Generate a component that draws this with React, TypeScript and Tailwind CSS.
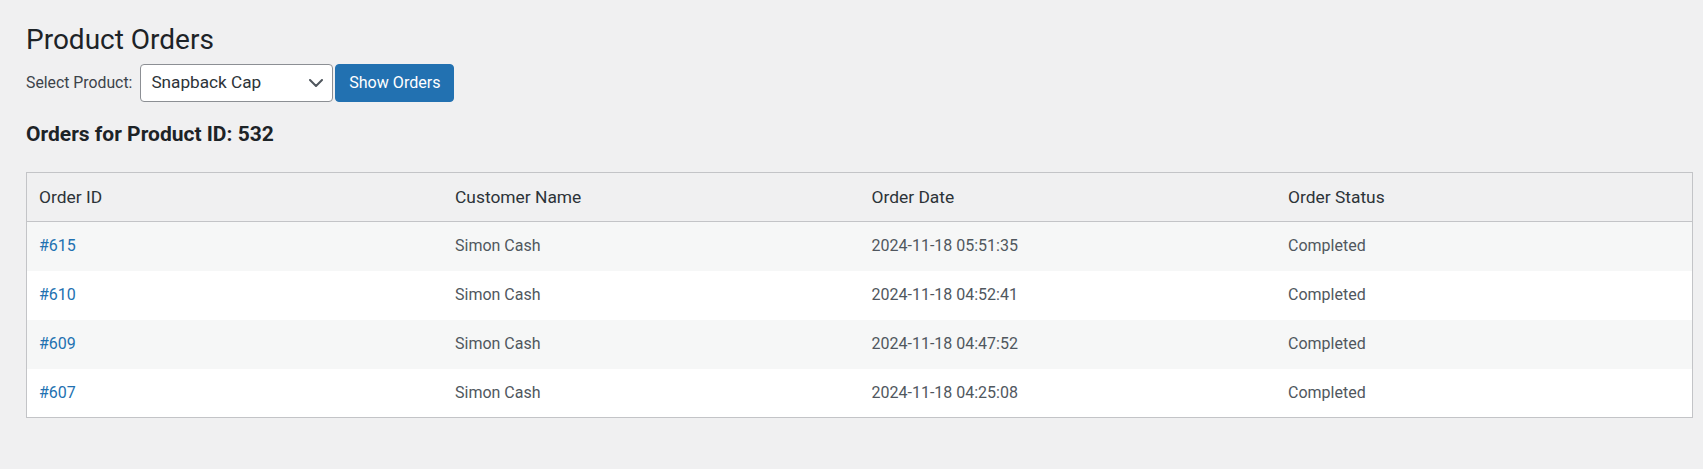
import React from "react";

const rows = [
  { id: "#615", name: "Simon Cash", date: "2024-11-18 05:51:35", status: "Completed" },
  { id: "#610", name: "Simon Cash", date: "2024-11-18 04:52:41", status: "Completed" },
  { id: "#609", name: "Simon Cash", date: "2024-11-18 04:47:52", status: "Completed" },
  { id: "#607", name: "Simon Cash", date: "2024-11-18 04:25:08", status: "Completed" },
];

export default function App() {
  return (
    <div
      className="min-h-screen bg-[#f0f0f1] pl-[26px] pr-[10px] pt-[22px]"
      style={{ fontFamily: "Roboto, 'Noto Sans', Arial, sans-serif" }}
    >
      <h1 className="text-[28px] leading-[36px] font-normal text-[#1d2327]">Product Orders</h1>
      <div className="mt-[6px] flex items-center h-[38px]">
        <span className="text-[15.8px] text-[#3c434a]">Select Product:</span>
        <div className="ml-[8px] flex h-[38px] w-[193px] items-center justify-between rounded-[4px] border border-[#8c8f94] bg-white pl-[10px] pr-[9px] text-[17.2px] text-[#2c3338]">
          <span>Snapback Cap</span>
          <svg width="14" height="8" viewBox="0 0 14 8" fill="none">
            <path d="M1 1l6 6 6-6" stroke="#50575e" strokeWidth="2" strokeLinecap="round" strokeLinejoin="round" />
          </svg>
        </div>
        <button className="ml-[2px] flex h-[38px] w-[119px] items-center justify-center rounded-[4px] border border-[#2271b1] bg-[#2271b1] text-[16.1px] text-white">
          Show Orders
        </button>
      </div>
      <h2 className="mt-[19px] text-[21px] leading-[26px] font-bold text-[#1d2327]">Orders for Product ID: 532</h2>
      <table className="mt-[25px] w-full table-fixed border-collapse border border-[#c3c4c7] text-[16px]">
        <thead>
          <tr className="h-[49px] border-b border-[#c3c4c7] bg-[#f0f0f1] text-[#2c3338] text-[17.4px]">
            <th className="px-[12px] text-left font-normal">Order ID</th>
            <th className="px-[12px] text-left font-normal">Customer Name</th>
            <th className="px-[12px] text-left font-normal">Order Date</th>
            <th className="px-[12px] text-left font-normal">Order Status</th>
          </tr>
        </thead>
        <tbody>
          {rows.map((r, i) => (
            <tr key={r.id} className={`h-[49px] text-[#50575e] ${i % 2 === 0 ? "bg-[#f6f7f7]" : "bg-white"}`}>
              <td className="px-[12px]">
                <a className="text-[#2271b1]">{r.id}</a>
              </td>
              <td className="px-[12px]">{r.name}</td>
              <td className="px-[12px]">{r.date}</td>
              <td className="px-[12px]">{r.status}</td>
            </tr>
          ))}
        </tbody>
      </table>
    </div>
  );
}
